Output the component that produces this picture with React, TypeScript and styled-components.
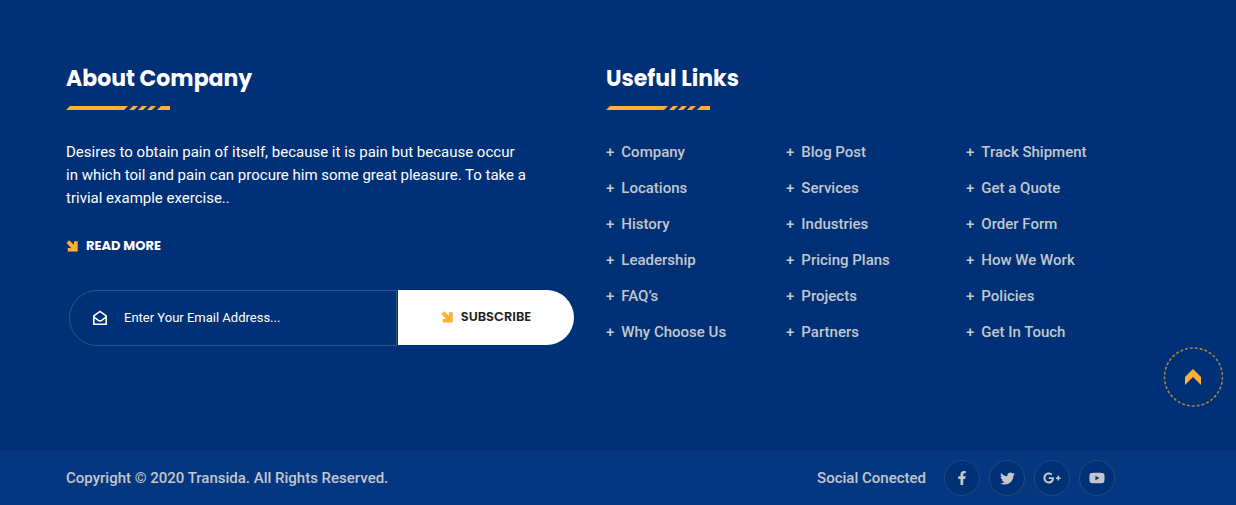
import React from 'react';
import styled, { createGlobalStyle } from 'styled-components';
import { FaFacebookF, FaTwitter, FaGooglePlusG, FaYoutube } from 'react-icons/fa';

const accent = '#ffaf36';
const muted = '#c3c7cd';

const GlobalStyle = createGlobalStyle`
  * { box-sizing: border-box; }
  body {
    margin: 0;
    background: #003075;
    color: #ffffff;
    font-family: Roboto, 'Liberation Sans', sans-serif;
    font-size: 15px;
    line-height: 23px;
  }
  h2, p, ul { margin: 0; padding: 0; }
  a { text-decoration: none; }
`;

const Footer = styled.footer`
  display: flex;
  flex-direction: column;
  min-height: 100vh;
`;

const Upper = styled.div`
  flex: 1;
  display: grid;
  grid-template-columns: 1fr 1fr;
  padding: 64px 90px 96px 66px;
`;

const Heading = styled.h2`
  font-family: Poppins, Inter, sans-serif;
  font-size: 22px;
  font-weight: 700;
  line-height: 30px;
`;

const Rule = styled.svg`
  display: block;
  margin-top: 12px;
  margin-bottom: 31px;
`;

const Intro = styled.p`
  max-width: 462px;
  font-weight: 400;
`;

const ReadMore = styled.a`
  display: inline-flex;
  align-items: center;
  gap: 8px;
  margin-top: 24px;
  color: #ffffff;
  font-family: Poppins, Inter, sans-serif;
  font-size: 13px;
  font-weight: 700;
`;

const Form = styled.form`
  display: flex;
  height: 56px;
  margin: 31px 32px 0 3px;
`;

const Field = styled.label`
  flex: 1;
  display: flex;
  align-items: center;
  gap: 16px;
  padding-left: 22px;
  border: 1px solid #2f558c;
  border-radius: 28px 0 0 28px;
`;

const EmailInput = styled.input`
  flex: 1;
  min-width: 0;
  padding: 0;
  border: 0;
  outline: 0;
  background: transparent;
  color: #ffffff;
  font: 400 13px Roboto, sans-serif;
  &::placeholder { color: #ffffff; opacity: 1; }
`;

const Subscribe = styled.button`
  display: flex;
  align-items: center;
  justify-content: center;
  gap: 8px;
  width: 177px;
  margin-bottom: 1px;
  border: 0;
  border-left: 1px solid #003075;
  border-radius: 0 28px 28px 0;
  background: #ffffff;
  color: #222222;
  font-family: Poppins, Inter, sans-serif;
  font-size: 13px;
  font-weight: 600;
  cursor: pointer;
`;

const LinkColumns = styled.div`
  display: grid;
  grid-template-columns: repeat(3, 1fr);
`;

const LinkList = styled.ul`
  display: flex;
  flex-direction: column;
  gap: 13px;
  list-style: none;
`;

const FooterLink = styled.a`
  display: flex;
  gap: 7px;
  color: ${muted};
  font-weight: 500;
`;

const Bottom = styled.div`
  display: flex;
  align-items: center;
  justify-content: space-between;
  min-height: 54px;
  padding: 0 121px 0 66px;
  background: #053781;
  color: ${muted};
  font-weight: 500;
`;

const Social = styled.div`
  display: flex;
  align-items: center;
  gap: 9px;
`;

const SocialLabel = styled.span`
  margin-right: 9px;
`;

const SocialLink = styled.a`
  display: flex;
  align-items: center;
  justify-content: center;
  width: 36px;
  height: 36px;
  border: 1px solid #24487d;
  border-radius: 50%;
  background: #003075;
  color: ${muted};
`;

const BackToTop = styled.button`
  position: fixed;
  right: 13px;
  bottom: 98px;
  display: flex;
  width: 60px;
  height: 60px;
  padding: 0;
  border: 0;
  border-radius: 50%;
  background: transparent;
  cursor: pointer;
`;

const StripedRule = () => (
  <Rule width="104" height="4" viewBox="0 0 104 4" fill={accent} aria-hidden="true">
    <path d="M4 0H62L58 4H0Z M67 0H72L68 4H63Z M76 0H81L77 4H72Z M85 0H90L86 4H81Z M95 0H104V4H91Z" />
  </Rule>
);

const DiagonalArrow = () => (
  <svg width="12" height="12" viewBox="0 0 12 12" fill={accent} aria-hidden="true">
    <path d="M3.2 0.3L8 4.8V1.2H11.7V11.5H1.8V7.9H5.2L0.5 3Z" />
  </svg>
);

const OpenEnvelope = () => (
  <svg
    width="16"
    height="16"
    viewBox="0 0 16 16"
    fill="none"
    stroke="#ffffff"
    strokeWidth="1.6"
    strokeLinejoin="round"
    aria-hidden="true"
  >
    <path d="M1.8 5.8L8 1.4L14.2 5.8V14.2H1.8Z" />
    <path d="M2 7L6 10.2Q8 11.6 10 10.2L14 7" />
  </svg>
);

const linkGroups = [
  ['Company', 'Locations', 'History', 'Leadership', 'FAQ’s', 'Why Choose Us'],
  ['Blog Post', 'Services', 'Industries', 'Pricing Plans', 'Projects', 'Partners'],
  ['Track Shipment', 'Get a Quote', 'Order Form', 'How We Work', 'Policies', 'Get In Touch'],
];

const socials = [
  { name: 'Facebook', Icon: FaFacebookF, size: 14 },
  { name: 'Twitter', Icon: FaTwitter, size: 15 },
  { name: 'Google Plus', Icon: FaGooglePlusG, size: 18 },
  { name: 'YouTube', Icon: FaYoutube, size: 16 },
];

export default function App() {
  return (
    <>
      <GlobalStyle />
      <Footer>
        <Upper>
          <section>
            <Heading>About Company</Heading>
            <StripedRule />
            <Intro>
              Desires to obtain pain of itself, because it is pain but because occur in which toil
              and pain can procure him some great pleasure. To take a trivial example exercise..
            </Intro>
            <ReadMore href="#about">
              <DiagonalArrow />
              READ MORE
            </ReadMore>
            <Form onSubmit={(event) => event.preventDefault()}>
              <Field>
                <OpenEnvelope />
                <EmailInput type="email" aria-label="Email address" placeholder="Enter Your Email Address..." />
              </Field>
              <Subscribe type="submit">
                <DiagonalArrow />
                SUBSCRIBE
              </Subscribe>
            </Form>
          </section>
          <section>
            <Heading>Useful Links</Heading>
            <StripedRule />
            <LinkColumns>
              {linkGroups.map((group) => (
                <LinkList key={group[0]}>
                  {group.map((label) => (
                    <li key={label}>
                      <FooterLink href="#links">
                        <span>+</span>
                        {label}
                      </FooterLink>
                    </li>
                  ))}
                </LinkList>
              ))}
            </LinkColumns>
          </section>
        </Upper>
        <Bottom>
          <p>Copyright © 2020 Transida. All Rights Reserved.</p>
          <Social>
            <SocialLabel>Social Conected</SocialLabel>
            {socials.map(({ name, Icon, size }) => (
              <SocialLink key={name} href="#social" aria-label={name}>
                <Icon size={size} />
              </SocialLink>
            ))}
          </Social>
        </Bottom>
      </Footer>
      <BackToTop type="button" aria-label="Back to top" onClick={() => window.scrollTo(0, 0)}>
        <svg width="60" height="60" viewBox="0 0 60 60" aria-hidden="true">
          <circle
            cx="30.5"
            cy="30"
            r="29"
            fill="none"
            stroke={accent}
            strokeOpacity="0.65"
            strokeWidth="1.6"
            pathLength="185"
            strokeDasharray="3 2"
          />
          <path fill={accent} d="M30 22L38 30V38L30 30L22 38V30Z" />
        </svg>
      </BackToTop>
    </>
  );
}
